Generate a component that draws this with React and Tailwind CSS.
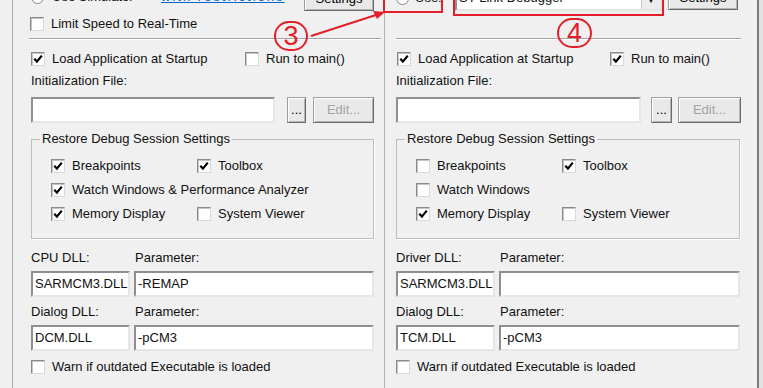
import React from 'react';

function Check({ checked }) {
  return (
    <span className="flex h-[14px] w-[14px] shrink-0 items-center justify-center border border-t-[#8a8a8a] border-l-[#8a8a8a] border-r-[#d9d9d9] border-b-[#d9d9d9] bg-white shadow-[inset_1px_1px_0_#c4c4c4]">
      {checked && (
        <svg width="10" height="10" viewBox="0 0 10 10">
          <path d="M1.3 4.8 L3.9 7.6 L8.8 1.6" fill="none" stroke="#000" strokeWidth="2.2" />
        </svg>
      )}
    </span>
  );
}

function CheckRow({ checked, label, className = '' }) {
  return (
    <div className={`flex h-[14px] items-center gap-[7px] ${className}`}>
      <Check checked={checked} />
      <span className="whitespace-nowrap">{label}</span>
    </div>
  );
}

function Field({ value, className = '' }) {
  return (
    <div
      className={`flex h-[26px] items-center border-2 border-t-[#8f8f8f] border-l-[#8f8f8f] border-r-[#e6e6e6] border-b-[#e6e6e6] bg-white pl-[2px] whitespace-nowrap ${className}`}
    >
      {value}
    </div>
  );
}

function Button({ children, disabled, className = '' }) {
  return (
    <div
      className={`flex items-center justify-center border border-[#a0a0a0] border-r-[#6b6b6b] border-b-[#6b6b6b] bg-[#e9e9e9] shadow-[inset_1px_1px_0_#ffffff,inset_-1px_-1px_0_#b5b5b5] ${
        disabled ? 'text-[#a3a3a3]' : 'text-black'
      } ${className}`}
    >
      {children}
    </div>
  );
}

function Radio() {
  return <span className="h-[13px] w-[13px] shrink-0 rounded-full border border-[#8a8a8a] bg-white" />;
}

function Separator({ className = '' }) {
  return <div className={`h-[2px] border-t border-[#a5a5a5] bg-white ${className}`} />;
}

function Group({ items, colOffset }) {
  return (
    <fieldset className="mt-[8px] h-[108px] border border-[#bdbdbd] pl-[8px] shadow-[1px_1px_0_#ffffff]">
      <legend className="px-[2px] leading-[16px]">Restore Debug Session Settings</legend>
      <div className="flex flex-col gap-[10px] pt-[12px] pl-[11px]">
        {items.map((row, i) => (
          <div key={i} className="flex">
            <div style={{ width: colOffset }}>
              <CheckRow checked={row[0].checked} label={row[0].label} />
            </div>
            {row[1] && <CheckRow checked={row[1].checked} label={row[1].label} />}
          </div>
        ))}
      </div>
    </fieldset>
  );
}

function DllBlock({ label, dll, param, paramW }) {
  return (
    <>
      <div className="flex h-[16px] items-center">
        <span className="w-[104px]">{label}</span>
        <span>Parameter:</span>
      </div>
      <div className="mt-[5px] flex gap-[4px]">
        <Field value={dll} className="w-[99px]" />
        <Field value={param} className={paramW} />
      </div>
    </>
  );
}

export default function App() {
  return (
    <div className="relative flex h-[388px] w-[763px] overflow-hidden bg-[#f0f0f0] font-['Liberation_Sans',Arial,sans-serif] text-[13px] leading-[16px] text-[#111]">
      <div className="w-[12px]" />
      <div className="w-px bg-[#a8a8a8]" />

      {/* left column: simulator */}
      <div className="w-[371px] pl-[18px]">
        <div className="-mt-[13px] flex h-[24px] items-center">
          <div className="flex -translate-y-[2px] items-center">
            <Radio />
            <span className="ml-[8px] w-[109px] whitespace-nowrap">Use Simulator</span>
            <span className="w-[124px] whitespace-nowrap tracking-[2px] text-[#0066cc] underline">with restrictions</span>
          </div>
          <Button className="ml-[19px] h-[24px] w-[70px]">Settings</Button>
        </div>
        <CheckRow className="mt-[6px] -ml-px" label="Limit Speed to Real-Time" />
        <Separator className="mt-[7px] -ml-[2px] w-[352px]" />
        <div className="mt-[12px] flex">
          <CheckRow className="w-[214px]" checked label="Load Application at Startup" />
          <CheckRow label="Run to main()" />
        </div>
        <div className="mt-[7px] h-[16px]">Initialization File:</div>
        <div className="mt-[8px] flex">
          <Field value="" className="w-[244px]" />
          <Button className="ml-[12px] h-[26px] w-[19px]">...</Button>
          <Button disabled className="ml-[7px] h-[26px] w-[61px]">Edit...</Button>
        </div>
        <div className="w-[343px]">
          <Group
            colOffset={146}
            items={[
              [{ checked: true, label: 'Breakpoints' }, { checked: true, label: 'Toolbox' }],
              [{ checked: true, label: 'Watch Windows & Performance Analyzer' }],
              [{ checked: true, label: 'Memory Display' }, { checked: false, label: 'System Viewer' }],
            ]}
          />
        </div>
        <div className="mt-[11px]">
          <DllBlock label="CPU DLL:" dll="SARMCM3.DLL" param="-REMAP" paramW="w-[240px]" />
        </div>
        <div className="mt-[7px]">
          <DllBlock label="Dialog DLL:" dll="DCM.DLL" param="-pCM3" paramW="w-[240px]" />
        </div>
        <CheckRow className="mt-[9px]" label="Warn if outdated Executable is loaded" />
      </div>

      <div className="w-px bg-[#b0b0b0]" />

      {/* right column: target debugger */}
      <div className="w-[372px] pl-[11px]">
        <div className="-mt-[13px] flex h-[24px] items-end">
          <div className="flex h-[22px] -translate-y-[2px] items-center">
            <Radio />
            <span className="ml-[6px] w-[40px]">Use:</span>
          </div>
          <div className="relative flex h-[23px] w-[207px] items-center border-2 border-t-[#8f8f8f] border-l-[#8f8f8f] border-r-[#e6e6e6] border-b-[#e6e6e6] bg-white pl-[2px]">
            <span className="-translate-y-[2px]">ST-Link Debugger</span>
            <div className="absolute right-0 top-0 flex h-full w-[19px] items-center justify-center border-l border-[#c8c8c8] bg-[#ececec] text-[9px]">
              ▼
            </div>
          </div>
          <Button className="ml-[6px] h-[24px] w-[70px] -translate-y-[1px]">Settings</Button>
        </div>
        <Separator className="mt-[27px] w-[345px]" />
        <div className="mt-[12px] flex">
          <CheckRow className="ml-px w-[213px]" checked label="Load Application at Startup" />
          <CheckRow checked label="Run to main()" />
        </div>
        <div className="mt-[7px] h-[16px]">Initialization File:</div>
        <div className="mt-[8px] flex">
          <Field value="" className="w-[245px]" />
          <Button className="ml-[10px] h-[26px] w-[21px]">...</Button>
          <Button disabled className="ml-[6px] h-[26px] w-[63px]">Edit...</Button>
        </div>
        <div className="w-[344px]">
          <Group
            colOffset={146}
            items={[
              [{ checked: false, label: 'Breakpoints' }, { checked: true, label: 'Toolbox' }],
              [{ checked: false, label: 'Watch Windows' }],
              [{ checked: true, label: 'Memory Display' }, { checked: false, label: 'System Viewer' }],
            ]}
          />
        </div>
        <div className="mt-[11px]">
          <DllBlock label="Driver DLL:" dll="SARMCM3.DLL" param="" paramW="w-[241px]" />
        </div>
        <div className="mt-[7px]">
          <DllBlock label="Dialog DLL:" dll="TCM.DLL" param="-pCM3" paramW="w-[241px]" />
        </div>
        <CheckRow className="mt-[9px]" label="Warn if outdated Executable is loaded" />
      </div>

      <div className="w-[2px] bg-[#7d7d7d]" />
      <div className="w-[4px] bg-[#e2e2e2]" />

      {/* red annotations */}
      <div className="absolute left-[383px] top-[-11px] h-[24px] w-[60px] border-2 border-[#e3202a]" />
      <div className="absolute left-[453px] top-[-11px] h-[27px] w-[211px] border-2 border-[#e3202a]" />
      <div className="absolute left-[274px] top-[21px] flex h-[30px] w-[34px] items-center justify-center rounded-full border-2 border-[#e3202a] text-[27px] leading-none text-[#e3202a]">
        3
      </div>
      <div className="absolute left-[557px] top-[18px] flex h-[30px] w-[35px] items-center justify-center rounded-full border-2 border-[#e3202a] text-[27px] leading-none text-[#e3202a]">
        4
      </div>
      <svg className="pointer-events-none absolute left-0 top-0" width="763" height="60">
        <line x1="311" y1="36" x2="376" y2="15" stroke="#e3202a" strokeWidth="2" />
        <polygon points="385,12 373,11 377,19" fill="#e3202a" />
      </svg>
    </div>
  );
}
